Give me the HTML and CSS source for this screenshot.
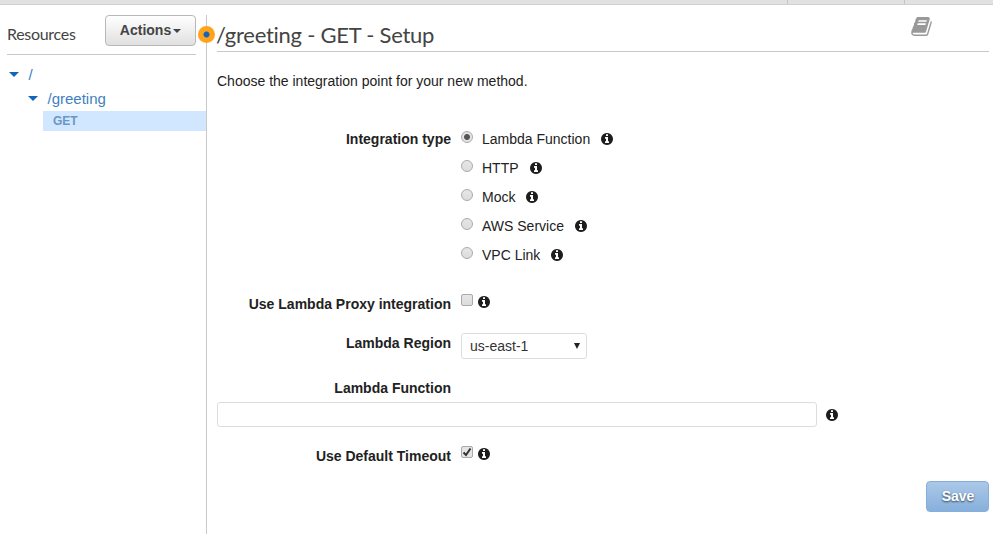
FILE: index.html
```html
<!DOCTYPE html>
<html lang="en">
  <head>
    <meta charset="UTF-8" />
    <title>API Gateway - Method Setup</title>
    <meta name="viewport" content="width=device-width, initial-scale=1.0" />
    <link rel="stylesheet" href="styles.css">
  </head>
  <body>
    <svg class="sprite" width="0" height="0">
      <symbol id="info" viewBox="128 128 1536 1536">
        <path d="M1152 1376v-160q0-14-9-23t-23-9h-96v-512q0-14-9-23t-23-9h-320q-14 0-23 9t-9 23v160q0 14 9 23t23 9h96v320h-96q-14 0-23 9t-9 23v160q0 14 9 23t23 9h448q14 0 23-9t9-23zm-128-896v-160q0-14-9-23t-23-9h-192q-14 0-23 9t-9 23v160q0 14 9 23t23 9h192q14 0 23-9t9-23zm640 416q0 209-103 385.500t-279.500 279.500-385.500 103-385.500-103-279.500-279.500-103-385.500 103-385.500 279.500-279.500 385.500-103 385.500 103 279.500 279.500 103 385.500z" />
      </symbol>
    </svg>

    <div class="topbar">
      <span class="crumb"></span>
      <span class="crumb"></span>
    </div>

    <div class="layout">
      <aside class="sidebar">
        <div class="sidebar-header">
          <h2>Resources</h2>
          <button class="btn btn-actions">Actions<span class="caret"></span></button>
        </div>
        <ul class="tree">
          <li class="root"><span class="arrow"></span><a>/</a></li>
          <li class="child"><span class="arrow"></span><a>/greeting</a></li>
          <li class="method">GET</li>
        </ul>
        <span class="handle"></span>
      </aside>

      <main class="content">
        <header class="content-header">
          <h1>/greeting - GET - Setup</h1>
          <svg class="book" viewBox="0 128 1664 1536">
            <path d="M1639 478q40 57 18 129l-275 906q-19 64-76.500 107.500t-122.500 43.500h-923q-77 0-148.500-53.500t-99.500-131.500q-24-67-2-127 0-4 3-27t4-37q1-8-3-21.500t-3-19.500q2-11 8-21t16.500-23.500 16.500-23.500q23-38 45-91.500t30-91.500q3-10 .5-30t-.5-28q3-11 17-28t17-23q21-36 42-92t25-90q1-9-2.500-32t.5-28q4-13 22-30.500t22-22.500q19-26 42.500-84.500t27.500-96.500q1-8-3-25.500t-2-26.500q2-8 9-18t18-23 17-21q8-12 16.500-30.500t15-35 16-36 19.500-32 26.500-23.500 36-11.500 47.500 5.500l-1 3q38-9 51-9h761q74 0 114 56t18 130l-274 906q-36 119-71.500 153.500t-128.500 34.500h-869q-27 0-38 15-11 16-1 43 24 70 144 70h923q29 0 56-15.500t35-41.500l300-987q7-22 5-57 38 15 59 43zm-1064 2q-4 13 2 22.500t20 9.500h608q13 0 25.500-9.500t16.500-22.500l21-64q4-13-2-22.500t-20-9.500h-608q-13 0-25.500 9.500t-16.500 22.500zm-83 256q-4 13 2 22.500t20 9.500h608q13 0 25.500-9.500t16.500-22.500l21-64q4-13-2-22.500t-20-9.500h-608q-13 0-25.500 9.500t-16.500 22.500z" />
          </svg>
        </header>

        <p class="intro">Choose the integration point for your new method.</p>

        <form class="setup">
          <div class="row row-type">
            <span class="label">Integration type</span>
            <div class="options">
              <label><input type="radio" name="type" checked />Lambda Function<svg class="info"><use href="#info" /></svg></label>
              <label><input type="radio" name="type" />HTTP<svg class="info"><use href="#info" /></svg></label>
              <label><input type="radio" name="type" />Mock<svg class="info"><use href="#info" /></svg></label>
              <label><input type="radio" name="type" />AWS Service<svg class="info"><use href="#info" /></svg></label>
              <label><input type="radio" name="type" />VPC Link<svg class="info"><use href="#info" /></svg></label>
            </div>
          </div>

          <div class="row row-proxy">
            <label class="label" for="proxy">Use Lambda Proxy integration</label>
            <div class="check">
              <input type="checkbox" id="proxy" />
              <svg class="info"><use href="#info" /></svg>
            </div>
          </div>

          <div class="row row-region">
            <label class="label" for="region">Lambda Region</label>
            <div class="select">
              <select id="region">
                <option>us-east-1</option>
              </select>
            </div>
          </div>

          <div class="row row-function">
            <label class="label" for="function">Lambda Function</label>
          </div>
          <div class="function-input">
            <input type="text" id="function" />
            <svg class="info"><use href="#info" /></svg>
          </div>

          <div class="row row-timeout">
            <label class="label" for="timeout">Use Default Timeout</label>
            <div class="check">
              <input type="checkbox" id="timeout" checked />
              <svg class="info"><use href="#info" /></svg>
            </div>
          </div>

          <div class="footer">
            <button type="button" class="btn btn-save">Save</button>
          </div>
        </form>
      </main>
    </div>
  </body>
</html>
```
FILE: styles.css
```css
* {
  box-sizing: border-box;
}
body {
  margin: 0;
  height: 534px;
  overflow: hidden;
  display: flex;
  flex-direction: column;
  font-family: "Liberation Sans", Arial, sans-serif;
  font-size: 14px;
  line-height: 20px;
  color: #222;
  background: #fff;
}
.sprite {
  position: absolute;
}
.topbar {
  height: 5px;
  flex: none;
  display: flex;
  justify-content: flex-end;
  background: #e1e1e1;
  border-bottom: 1px solid #d0d0d0;
}
.crumb {
  width: 117px;
  border-left: 1px solid #c4c4c4;
}
.crumb:last-child {
  width: 89px;
}
.layout {
  flex: 1;
  display: flex;
  padding-top: 10px;
}

/* sidebar */
.sidebar {
  position: relative;
  width: 207px;
  flex: none;
  border-right: 1px solid #c8c8c8;
}
.sidebar-header {
  display: flex;
  justify-content: space-between;
  align-items: flex-start;
  height: 40px;
  margin: 0 10px 0 7px;
  border-bottom: 1px solid #c8c8c8;
}
h1,
h2 {
  margin: 0;
  font-family: Lato, sans-serif;
  font-weight: normal;
  letter-spacing: -0.3px;
  color: #444;
}
h2 {
  font-size: 16px;
  line-height: 20px;
  margin-top: 9px;
}
.btn {
  font-family: inherit;
  font-size: 14px;
  font-weight: bold;
  height: 31px;
  padding: 0 0 2px;
  border-radius: 4px;
}
.btn-actions {
  display: flex;
  align-items: center;
  justify-content: center;
  width: 91px;
  color: #444;
  border: 1px solid #b8b8b8;
  background: linear-gradient(#fff, #e0e0e0);
}
.caret {
  margin: 2px 0 0 2px;
  border: 4px solid transparent;
  border-top-color: #444;
  border-bottom: 0;
}
.tree {
  list-style: none;
  margin: 8px 0 0;
  padding: 0;
  font-size: 15px;
  color: #3f7fc1;
}
.tree li {
  display: flex;
  align-items: center;
  height: 24px;
}
.tree .root {
  padding-left: 9px;
}
.tree .child {
  padding-left: 28px;
}
.tree .method {
  height: 20px;
  margin-left: 43px;
  padding-left: 10px;
  font-size: 12px;
  font-weight: bold;
  color: #6a97c4;
  background: #d1e7ff;
}
.arrow {
  margin: -1px 9.500px 0 0;
  border: 5px solid transparent;
  border-top-color: #1166bb;
  border-bottom: 0;
}
.handle {
  position: absolute;
  top: 11px;
  right: -9px;
  width: 17px;
  height: 17px;
  border-radius: 50%;
  background: radial-gradient(circle, #1166bb 2.500px, #ffa31a 3.500px);
}

/* main panel */
.content {
  flex: 1;
  padding: 0 4px 0 10px;
}
.content-header {
  display: flex;
  justify-content: space-between;
  height: 37px;
  border-bottom: 1px solid #c8c8c8;
}
h1 {
  font-size: 22px;
  line-height: 26px;
  margin: 7px 0 0 -1px;
  letter-spacing: -0.250px;
}
.book {
  width: 21px;
  height: 19px;
  margin: 2px 57px 0 0;
  fill: #999;
}
.intro {
  margin: 19px 0 0;
}
.row {
  display: flex;
  gap: 10px;
}
.label {
  width: 234px;
  text-align: right;
  font-weight: bold;
}
.row-type {
  margin-top: 38px;
}
.options label {
  display: flex;
  height: 29px;
}
.info {
  width: 12px;
  height: 12px;
  fill: #1d1d1d;
}
.options .info {
  margin: 4px 0 0 11px;
}
input[type="radio"],
input[type="checkbox"] {
  appearance: none;
  width: 12px;
  height: 12px;
  margin: 2px 0 0;
  border: 1px solid #aaa;
  background: linear-gradient(#e6e6e6, #dcdcdc);
}
input[type="radio"] {
  margin-right: 9px;
  border-radius: 50%;
}
input[type="radio"]:checked {
  background: radial-gradient(circle, #555 2.500px, #e4e4e4 3.500px);
}
input[type="checkbox"] {
  border-radius: 2px;
}
input[type="checkbox"]:checked {
  background: url("data:image/svg+xml,%3Csvg xmlns='http://www.w3.org/2000/svg' viewBox='0 0 10 10'%3E%3Cpath d='M1.500 5.500L4 8L8.500 1.500' fill='none' stroke='%23333' stroke-width='2'/%3E%3C/svg%3E") #e4e4e4;
}
.check {
  display: flex;
  gap: 5px;
}
.check input {
  margin-top: 0;
}
.check .info {
  margin-top: 2px;
}
.row-proxy {
  margin-top: 20px;
}
.row-region {
  margin-top: 19px;
}
.select {
  position: relative;
}
.select::after {
  content: "";
  position: absolute;
  right: 7px;
  top: 10px;
  border: 3px solid transparent;
  border-top: 6px solid #222;
  border-bottom: 0;
}
select {
  appearance: none;
  display: block;
  width: 126px;
  height: 26px;
  padding: 0 8px;
  font: inherit;
  color: #333;
  border: 1px solid #ddd;
  border-radius: 3px;
  background: #fff;
}
.row-function {
  margin-top: 19px;
}
.function-input {
  display: flex;
  align-items: center;
  gap: 9px;
  margin-top: 4px;
}
.function-input input {
  width: 600px;
  height: 25px;
  border: 1px solid #ddd;
  border-radius: 3px;
}
.row-timeout {
  margin-top: 19px;
}
.footer {
  display: flex;
  justify-content: flex-end;
  margin-top: 15px;
}
.btn-save {
  width: 63px;
  padding-left: 1px;
  color: #fff;
  text-shadow: 0 1px 2px #345;
  border: 1px solid #85aedb;
  background: linear-gradient(#abc8e8, #87b0dc);
}
```
